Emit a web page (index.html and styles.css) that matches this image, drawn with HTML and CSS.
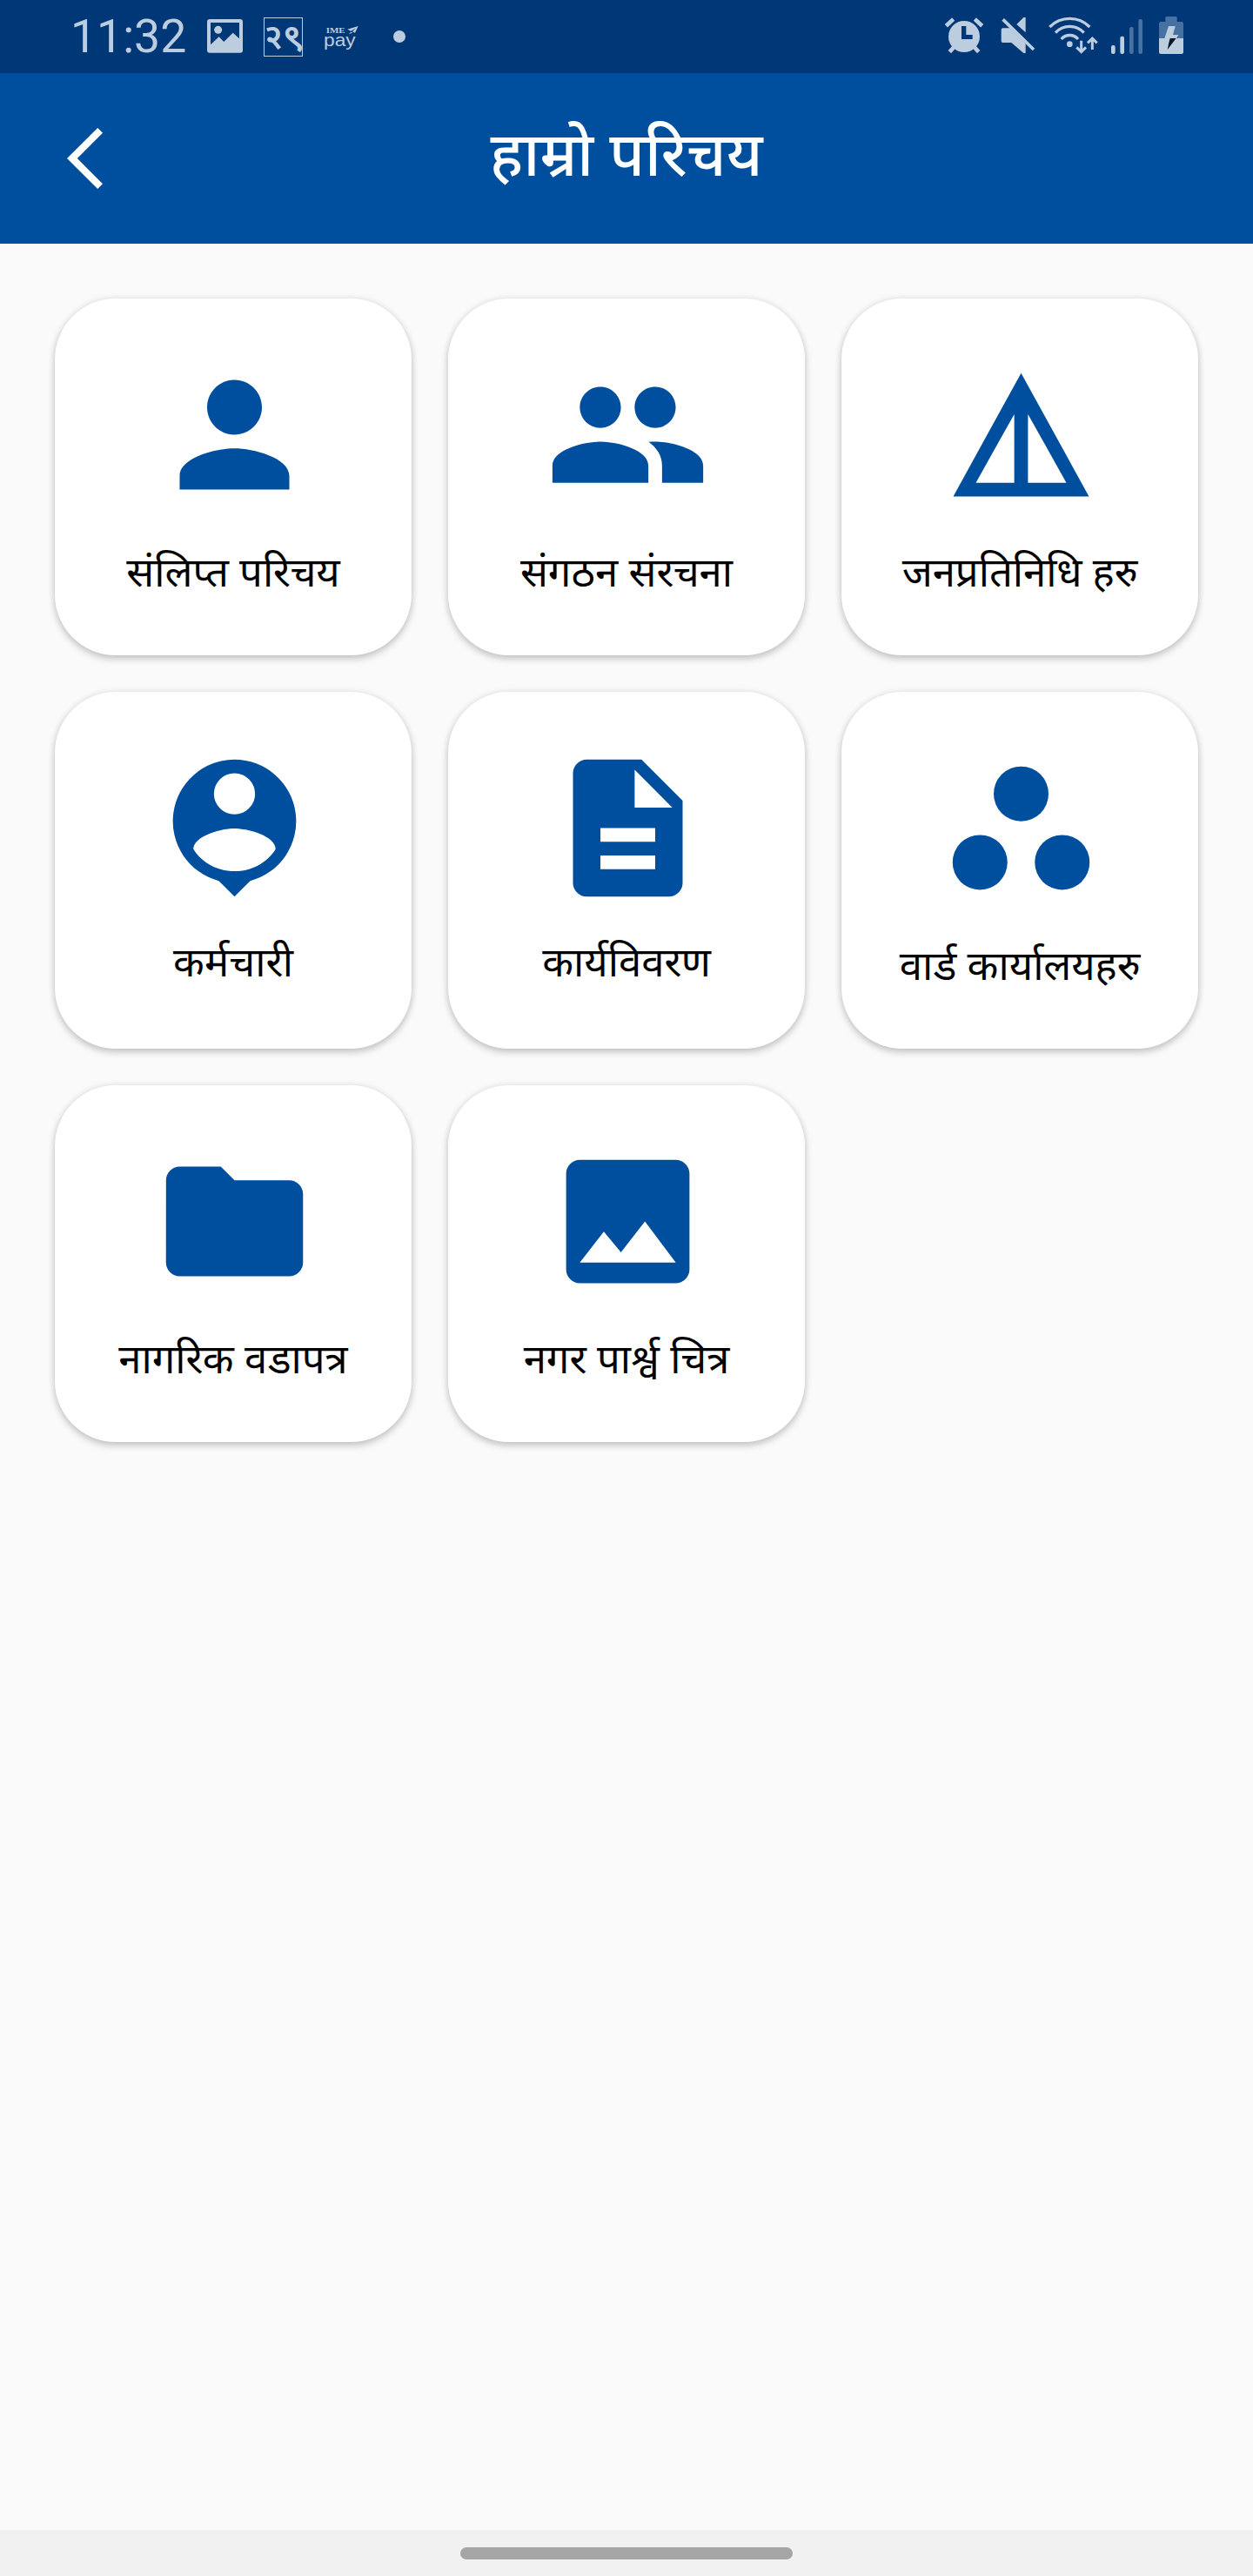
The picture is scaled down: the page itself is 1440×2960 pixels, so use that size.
FILE: index.html
```html
<!DOCTYPE html>
<html lang="hi">
<head>
<meta charset="utf-8">
<title>हाम्रो परिचय</title>
<link rel="stylesheet" href="styles.css">
</head>
<body>
<div class="screen">
  <div class="status">
    <span class="time">11:32</span>
    <svg class="st-photo" viewBox="534 54 123 144"><path fill-rule="evenodd" d="M543 66H648Q657 66 657 75V173Q657 182 648 182H543Q534 182 534 173V75Q534 66 543 66ZM546 78V154L575 127L592 144L623 113L645 133V78Z"/><circle cx="572" cy="103" r="13.5"/></svg>
    <span class="date">२९</span>
    <span class="pay">
      <svg viewBox="939 78 120 87"><text class="ime" x="944" y="107" textLength="66" lengthAdjust="spacingAndGlyphs">IME</text><text class="payword" x="936" y="152" textLength="110" lengthAdjust="spacingAndGlyphs">pay</text><path d="M1018 95L1055 84L1044 107L1035 103L1047 91L1030 101ZM1030 104L1036 107L1022 111Z"/></svg>
    </span>
    <span class="dot"></span>
    <div class="system">
      <svg class="st-alarm" viewBox="72 54 138 144"><circle cx="141" cy="126" r="54"/><path class="line" stroke-width="14" d="M79 89L104 66M178 66L203 89M91 179L106 162M191 179L176 162"/><path class="cut" d="M132 90H148V120H170V135H132Z"/></svg>
      <svg class="st-mute" viewBox="267 54 120 144"><path d="M275 97H299L353 150V183H346L304 147H275Q269 147 269 141V103Q269 97 275 97ZM322 84L346 60H353V112Z"/><path class="line" stroke-width="11" d="M275 67L381 171"/></svg>
      <svg class="st-wifi" viewBox="432 54 171 144"><path class="line" stroke-width="10" d="M436 93A97 97 0 0 1 574 93M456 113A66 66 0 0 1 554 113M476 135A38 38 0 0 1 534 135"/><circle cx="505" cy="152" r="10"/><path class="line" stroke-width="9" d="M545 140V178M529 163L545 179L561 163M583 171V132M567 148L583 132L599 148"/></svg>
      <svg class="st-signal" viewBox="648 54 108 144"><rect x="648" y="156" width="14" height="30" rx="6"/><rect x="679" y="125" width="14" height="61" rx="6"/><g class="dim"><rect x="711" y="93" width="14" height="93" rx="6"/><rect x="742" y="66" width="14" height="120" rx="6"/></g></svg>
      <svg class="st-battery" viewBox="813 54 84 144"><path class="dim" d="M839 57H871Q875 57 875 61V75H891Q897 75 897 81V132H813V81Q813 75 819 75H835V61Q835 57 839 57Z"/><path d="M813 132H897V180Q897 186 891 186H819Q813 186 813 180ZM846 90H869L861 120H880L873 132H832Z"/><path class="bolt" d="M851 132H872L842 171L847 147Z"/></svg>
    </div>
  </div>

  <header class="bar">
    <svg class="back" viewBox="77 147 41 70"><path d="M112.2 147L118 152.8L88.8 182L118 211.2L112.2 217L77 182Z"/></svg>
    <h1>हाम्रो परिचय</h1>
  </header>

  <main class="grid">
    <a class="card"><svg viewBox="0 0 24 24"><path d="M12 12c2.21 0 4-1.79 4-4s-1.79-4-4-4-4 1.79-4 4 1.79 4 4 4zm0 2c-2.67 0-8 1.34-8 4v2h16v-2c0-2.66-5.33-4-8-4z"/></svg><span>संलिप्त परिचय</span></a>
    <a class="card"><svg viewBox="0 0 24 24"><path d="M16 11c1.66 0 2.99-1.34 2.99-3S17.66 5 16 5c-1.66 0-3 1.34-3 3s1.34 3 3 3zm-8 0c1.66 0 2.99-1.34 2.99-3S9.66 5 8 5C6.34 5 5 6.34 5 8s1.34 3 3 3zm0 2c-2.33 0-7 1.17-7 3.5V19h14v-2.5c0-2.33-4.67-3.5-7-3.5zm8 0c-.29 0-.62.02-.97.05 1.16.84 1.97 1.97 1.97 3.45V19h6v-2.5c0-2.33-4.67-3.5-7-3.5z"/></svg><span>संगठन संरचना</span></a>
    <a class="card"><svg viewBox="0 0 24 24"><path fill-rule="evenodd" d="M12 3L2.1 21h19.8zM13 9l5.6 10H13zM11 9v10H5.4z"/></svg><span>जनप्रतिनिधि हरु</span></a>
    <a class="card raised"><svg viewBox="0 0 24 24"><path fill-rule="evenodd" d="M12 2a9 9 0 0 0-2.3 17.7L12 22l2.3-2.3A9 9 0 0 0 12 2zM12 4a3 3 0 1 1 0 6 3 3 0 0 1 0-6zM12 12.05c2 0 6 1.1 6 3.03C16.7 17.1 14.5 18.3 12 18.3S7.3 17.1 6 15.08c0-1.93 4-3.03 6-3.03z"/></svg><span>कर्मचारी</span></a>
    <a class="card raised"><svg viewBox="0 0 24 24"><path fill-rule="evenodd" d="M14 2H6c-1.1 0-2 .9-2 2v16c0 1.1.89 2 1.99 2H18c1.1 0 2-.9 2-2V8l-6-6zm2 16H8v-2h8v2zm0-4H8v-2h8v2zm-3-5V3.5L18.5 9H13z"/></svg><span>कार्यविवरण</span></a>
    <a class="card"><svg viewBox="0 0 24 24"><circle cx="12" cy="7" r="4"/><circle cx="6" cy="17" r="4"/><circle cx="18" cy="17" r="4"/></svg><span>वार्ड कार्यालयहरु</span></a>
    <a class="card"><svg viewBox="0 0 24 24"><path d="M10 4H4c-1.1 0-1.99.9-1.99 2L2 18c0 1.1.9 2 2 2h16c1.1 0 2-.9 2-2V8c0-1.1-.9-2-2-2h-8l-2-2z"/></svg><span>नागरिक वडापत्र</span></a>
    <a class="card"><svg viewBox="0 0 24 24"><path d="M21 19V5c0-1.1-.9-2-2-2H5c-1.1 0-2 .9-2 2v14c0 1.1.9 2 2 2h14c1.1 0 2-.9 2-2zM8.5 13.5l2.5 3.01L14.5 12l4.5 6H5l3.5-4.5z"/></svg><span>नगर पार्श्व चित्र</span></a>
  </main>

  <footer class="nav"><span class="handle"></span></footer>
</div>
</body>
</html>
```

FILE: styles.css
```css
* { box-sizing: border-box; }

body {
  margin: 0;
  background: #fafafa;
  font-family: "Noto Sans Devanagari UI", "Noto Sans Devanagari", "Noto Sans", sans-serif;
}

.screen {
  display: flex;
  flex-direction: column;
  width: 1440px;
  height: 2960px;
}

/* Status bar */
.status {
  display: flex;
  align-items: center;
  height: 84px;
  padding: 0 80px 0 81px;
  background: #003877;
  color: #bdcde0;
  fill: #bdcde0;
}
.status svg { display: block; height: 48px; }
.time {
  width: 157px;
  font: 400 53.5px/84px Roboto, sans-serif;
}
.st-photo { width: 41px; }
.date {
  display: flex;
  align-items: center;
  justify-content: center;
  width: 45px;
  height: 45px;
  margin-left: 24px;
  padding-bottom: 3px;
  border: 1px solid #bdcde0;
  font-size: 40px;
  font-weight: 600;
  line-height: 40px;
}
.pay { margin-left: 25px; }
.status .pay svg { width: 40px; height: 29px; overflow: visible; }
.ime { font: 700 26px "Liberation Serif", serif; }
.payword { font: 400 62px "Liberation Sans", sans-serif; }
.dot {
  width: 14px;
  height: 14px;
  margin-left: 39px;
  border-radius: 50%;
  background: #bdcde0;
}
.system { display: flex; margin-left: auto; }
.st-alarm { width: 46px; }
.st-mute { width: 40px; margin-left: 19px; }
.st-wifi { width: 57px; margin-left: 15px; }
.st-signal { width: 36px; margin-left: 15px; }
.st-battery { width: 28px; margin-left: 19px; }
.line { fill: none; stroke: #bdcde0; }
.cut { fill: #003877; }
.dim { fill: #4672a1; }
.bolt { fill: #07182a; }

/* Title bar */
.bar {
  display: grid;
  grid-template-columns: 41px 1fr 41px;
  align-items: center;
  height: 196px;
  padding: 0 77px;
  background: #004f9e;
  color: #fff;
}
.back { width: 41px; height: 70px; fill: #fff; }
.bar h1 {
  align-self: start;
  margin: 0;
  font-size: 70px;
  font-weight: 500;
  line-height: 182px;
  text-align: center;
}

/* Menu cards */
.grid {
  display: grid;
  grid-template-columns: repeat(3, 410px);
  grid-auto-rows: 410px;
  gap: 42px;
  padding: 63px;
  flex: 1;
  align-content: start;
}
.card {
  display: flex;
  flex-direction: column;
  align-items: center;
  padding-top: 61.5px;
  border-radius: 70px;
  background: #fff;
  box-shadow: 0 4px 9px rgba(0, 0, 0, .2), 0 0 8px rgba(0, 0, 0, .08);
  color: #000;
}
.card svg {
  flex: none;
  width: 189px;
  height: 189px;
  margin-left: 3px;
  fill: #004f9e;
}
.card span {
  margin-top: 28px;
  font-size: 47.2px;
  line-height: 68px;
  white-space: nowrap;
}
.card.raised span { margin-top: 24px; }

/* Gesture bar */
.nav {
  display: flex;
  justify-content: center;
  height: 53px;
  padding-top: 20px;
  background: #f1f1f1;
}
.handle {
  width: 382px;
  height: 14px;
  border-radius: 7px;
  background: #a6a6a6;
}
```
